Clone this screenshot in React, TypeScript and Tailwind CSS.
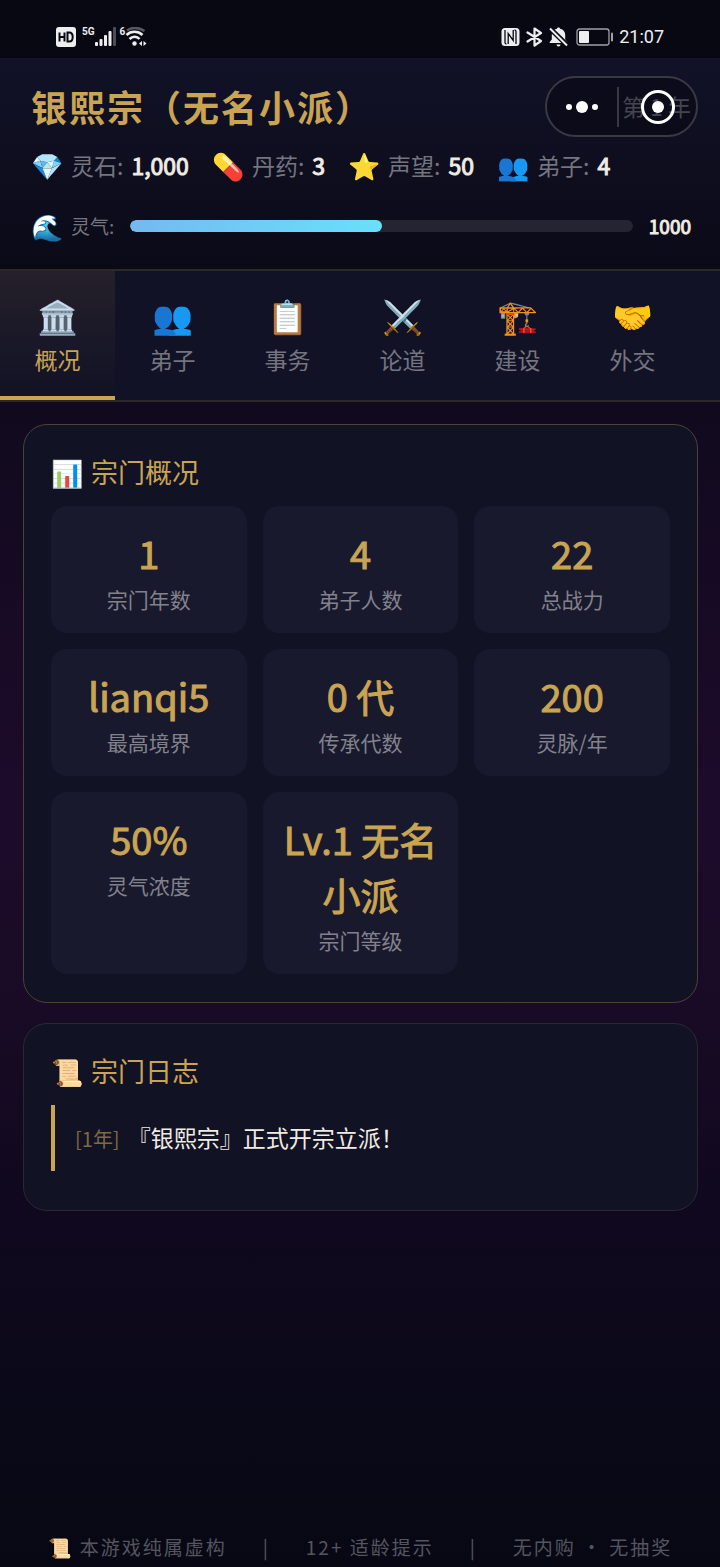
import React, { useState } from 'react';

const resources = [
    { icon: '💎', label: '灵石', value: '1,000' },
    { icon: '💊', label: '丹药', value: '3' },
    { icon: '⭐', label: '声望', value: '50' },
    { icon: '👥', label: '弟子', value: '4' },
];

const tabs = [
    { icon: '🏛️', label: '概况' },
    { icon: '👥', label: '弟子' },
    { icon: '📋', label: '事务' },
    { icon: '⚔️', label: '论道' },
    { icon: '🏗️', label: '建设' },
    { icon: '🤝', label: '外交' },
];

const stats = [
    { value: '1', label: '宗门年数' },
    { value: '4', label: '弟子人数' },
    { value: '22', label: '总战力' },
    { value: 'lianqi5', label: '最高境界' },
    { value: '0 代', label: '传承代数' },
    { value: '200', label: '灵脉/年' },
    { value: '50%', label: '灵气浓度' },
    { value: 'Lv.1 无名小派', label: '宗门等级' },
];

const logs = [{ year: 1, text: '『银熙宗』正式开宗立派！' }];

const qi = { value: 1000, max: 2000 };

const StatusBar: React.FC = () => (
    <div className="flex h-[58px] items-center justify-between bg-[#080813] px-14 pt-4 text-[#eeeef0]">
        <div className="flex items-center">
            <svg width="20" height="20" viewBox="0 0 20 20" role="img" aria-label="HD">
                <rect width="20" height="20" rx="3" fill="currentColor" />
                <path d="M3.5 5.5v9M8.5 5.5v9M3.5 10h5M11.5 5.5v9h1.8c2.2 0 3.4-1.6 3.4-4.5s-1.2-4.5-3.4-4.5z" fill="none" stroke="#080813" strokeWidth="2" />
            </svg>
            <span className="ml-1.5 self-start font-['Roboto',sans-serif] text-[10px] leading-[10px] font-bold">5G</span>
            <svg width="21" height="20" viewBox="0 0 21 20" fill="currentColor" aria-hidden="true">
                <rect x="0" y="15" width="3" height="4" rx="1" />
                <rect x="4.5" y="12" width="3" height="7" rx="1" />
                <rect x="9" y="8" width="3" height="11" rx="1" />
                <rect x="13.5" y="4" width="3" height="15" rx="1" />
                <rect x="18" y="0" width="3" height="19" rx="1" opacity="0.3" />
            </svg>
            <span className="ml-1 self-start font-['Roboto',sans-serif] text-[10px] leading-[10px] font-bold">6</span>
            <svg width="22" height="20" viewBox="0 0 22 20" fill="none" stroke="currentColor" strokeWidth="2.5" aria-hidden="true">
                <path d="M2 3.6C7 0 13 0 19.500 4" opacity="0.35" />
                <path d="M1.500 8C6 3.800 13 3.800 17.500 8" />
                <path d="M4.500 12C7.500 9 12 9 14.500 12" />
                <circle cx="9.500" cy="16.500" r="2.200" fill="currentColor" stroke="none" />
                <path d="M17 14v5l-3-2.500zM18.500 14v5l3-2.500z" fill="currentColor" stroke="none" />
            </svg>
        </div>
        <div className="flex items-center">
            <svg width="19" height="20" viewBox="0 0 19 20" aria-hidden="true">
                <rect x="0.5" y="1" width="18" height="18" rx="3.5" fill="currentColor" />
                <path d="M4 3v12.500c0 1 .7 1.500 1.500 1.500M15 17V4.500c0-1-.7-1.500-1.500-1.500M7.200 17V6.500l5 7V3" fill="none" stroke="#080813" strokeWidth="1.300" />
            </svg>
            <svg className="ml-1.5" width="17" height="20" viewBox="0 0 17 20" fill="none" stroke="currentColor" strokeWidth="2.2" strokeLinejoin="round" strokeLinecap="round" aria-hidden="true">
                <path d="M1.5 5.5L15 14l-6.5 4.5v-17L15 6 1.5 14.5" />
            </svg>
            <svg className="ml-1.5" width="19" height="20" viewBox="0 0 19 20" aria-hidden="true">
                <path d="M9.5 0.500c1 0 1.600.6 1.600 1.300 3.300.7 5.100 3 5.100 6v4.700l2.100 2.500v1H.7v-1l2.100-2.500V7.800c0-3 1.800-5.300 5.100-6 0-.7.6-1.300 1.600-1.300zM7.500 17.500h4a2 2 0 0 1-4 0z" fill="currentColor" />
                <path d="M1 1.5L19 19" stroke="#080813" strokeWidth="5" />
                <path d="M1 1.5L18 18.500" stroke="currentColor" strokeWidth="2" />
            </svg>
            <svg className="ml-2" width="37" height="20" viewBox="0 0 37 20" aria-hidden="true">
                <rect x="1" y="2" width="32" height="16" rx="2.5" fill="none" stroke="#a0a0a8" strokeWidth="1.3" />
                <rect x="3" y="4" width="10" height="12" rx="1" fill="currentColor" />
                <rect x="35" y="5.5" width="2" height="9" rx="1" fill="#a0a0a8" />
            </svg>
            <time className="ml-1.5 font-['Roboto',sans-serif] text-[18px] leading-5">21:07</time>
        </div>
    </div>
);

interface PanelProps {
    icon: string;
    title: string;
    className: string;
    children: React.ReactNode;
}

const Panel: React.FC<PanelProps> = ({ icon, title, className, children }) => (
    <section className={`rounded-3xl border bg-[#121225] px-[27px] pt-[27px] ${className}`}>
        <h2 className="mb-[15px] flex items-center gap-2 text-[27px] leading-[39px] text-[#c9a452]">
            <span className="w-8 text-[26px]">{icon}</span>
            {title}
        </h2>
        {children}
    </section>
);

const App: React.FC = () => {
    const [activeTab, setActiveTab] = useState('概况');

    return (
        <div className="relative flex min-h-screen flex-col bg-[linear-gradient(#0a0a18_0%,#110a1e_26%,#1d0b2b_52%,#190b25_64%,#0f081e_78%,#0a0918_90%,#080814_100%)] font-['Noto_Sans_CJK_SC',sans-serif] text-[#f0ece4]">
            <StatusBar />

            <header className="border-b-2 border-[#2d2928] bg-linear-to-b from-[#121228] to-[#0a0a17] pt-[22px] pr-[29px] pb-[27px] pl-[31px]">
                <div className="flex items-center justify-between">
                    <h1 className="text-[36px] leading-[52px] font-bold tracking-[2px] text-[#c9a452]">银熙宗（无名小派）</h1>
                    <span className="text-[23px] text-[#85858f]">第 1 年</span>
                </div>

                <ul className="mt-4 flex gap-[23px]">
                    {resources.map(r => (
                        <li key={r.label} className="flex items-center gap-2 text-[23px] leading-[34px]">
                            <span className="w-8 text-[26px]">{r.icon}</span>
                            <span className="text-[#75757f]">{r.label}:</span>
                            <span className="[-webkit-text-stroke:1px]">{r.value}</span>
                        </li>
                    ))}
                </ul>

                <div className="mt-7 flex items-center text-[19px] leading-8">
                    <span className="w-8 text-[26px]">🌊</span>
                    <span id="qi-label" className="ml-2 text-[#75757f]">灵气:</span>
                    <div
                        role="progressbar"
                        aria-labelledby="qi-label"
                        aria-valuenow={qi.value}
                        aria-valuemax={qi.max}
                        className="mx-4 h-3 flex-1 overflow-hidden rounded-full bg-[#242432]"
                    >
                        <div
                            className="h-full rounded-full bg-linear-to-r from-[#74b9f0] to-[#68e0fb]"
                            style={{ width: `${(qi.value / qi.max) * 100}%` }}
                        />
                    </div>
                    <span className="[-webkit-text-stroke:1px]">{qi.value}</span>
                </div>
            </header>

            <nav className="flex border-b-2 border-[#2d2928] bg-[#121226]">
                {tabs.map(tab => (
                    <button
                        key={tab.label}
                        onClick={() => setActiveTab(tab.label)}
                        className={`flex w-[115px] flex-col items-center gap-2 border-b-4 pt-6 pb-5 text-[23px] leading-[33px] ${
                            activeTab === tab.label
                            ? 'border-[#c9a452] bg-linear-to-b from-[#25202a] to-[#121226] text-[#c9a452]'
                            : 'border-transparent text-[#75757f]'
                        }`}
                    >
                        <span className="text-[33px] leading-10">{tab.icon}</span>
                        {tab.label}
                    </button>
                ))}
            </nav>

            <main className="flex flex-col gap-5 pt-[22px] pr-[22px] pb-10 pl-[23px]">
                <Panel icon="📊" title="宗门概况" className="border-[#4b4236] pb-7">
                    <div className="grid grid-cols-3 gap-4">
                        {stats.map(s => (
                            <div key={s.label} className="rounded-2xl bg-[#19192d] px-4 py-[19px] text-center">
                                <p className="text-[38px] leading-[55px] text-[#c9a452] [-webkit-text-stroke:1px]">{s.value}</p>
                                <p className="mt-1 text-[21px] leading-[30px] text-[#82828c]">{s.label}</p>
                            </div>
                        ))}
                    </div>
                </Panel>

                <Panel icon="📜" title="宗门日志" className="border-[#2b2930] pb-[39px]">
                    <ul>
                        {logs.map(log => (
                            <li key={log.text} className="border-l-4 border-[#c9a452] py-4 pl-5 text-[23px] leading-8">
                                <span className="mr-2 text-[20px] text-[#7d6a42]">[{log.year}年]</span>
                                {log.text}
                            </li>
                        ))}
                    </ul>
                </Panel>
            </main>

            <footer className="mt-auto flex items-center justify-center gap-9 pb-1.5 text-[19px] leading-7 tracking-[2px] text-[#55555f]">
                <span><span className="mr-2 tracking-normal">📜</span>本游戏纯属虚构</span>
                <span>|</span>
                <span>12+ 适龄提示</span>
                <span>|</span>
                <span>无内购 · 无抽奖</span>
            </footer>

            {/* host app capsule, floats over the header */}
            <div className="absolute top-[76px] right-[22px] flex h-[61px] w-[153px] items-center rounded-full border-2 border-[#393944] bg-[#06060f]/50">
                <button aria-label="更多" className="flex h-full flex-1 items-center justify-center gap-1">
                    <i className="size-1.5 rounded-full bg-white" />
                    <i className="size-3 rounded-full bg-white" />
                    <i className="size-1.5 rounded-full bg-white" />
                </button>
                <i className="h-10 w-0.5 bg-[#393944]" />
                <button aria-label="关闭" className="flex h-full w-[77px] items-center justify-center">
                    <i className="flex size-[34px] items-center justify-center rounded-full border-3 border-white">
                        <i className="size-3 rounded-full bg-white" />
                    </i>
                </button>
            </div>
        </div>
    );
};

export default App;
